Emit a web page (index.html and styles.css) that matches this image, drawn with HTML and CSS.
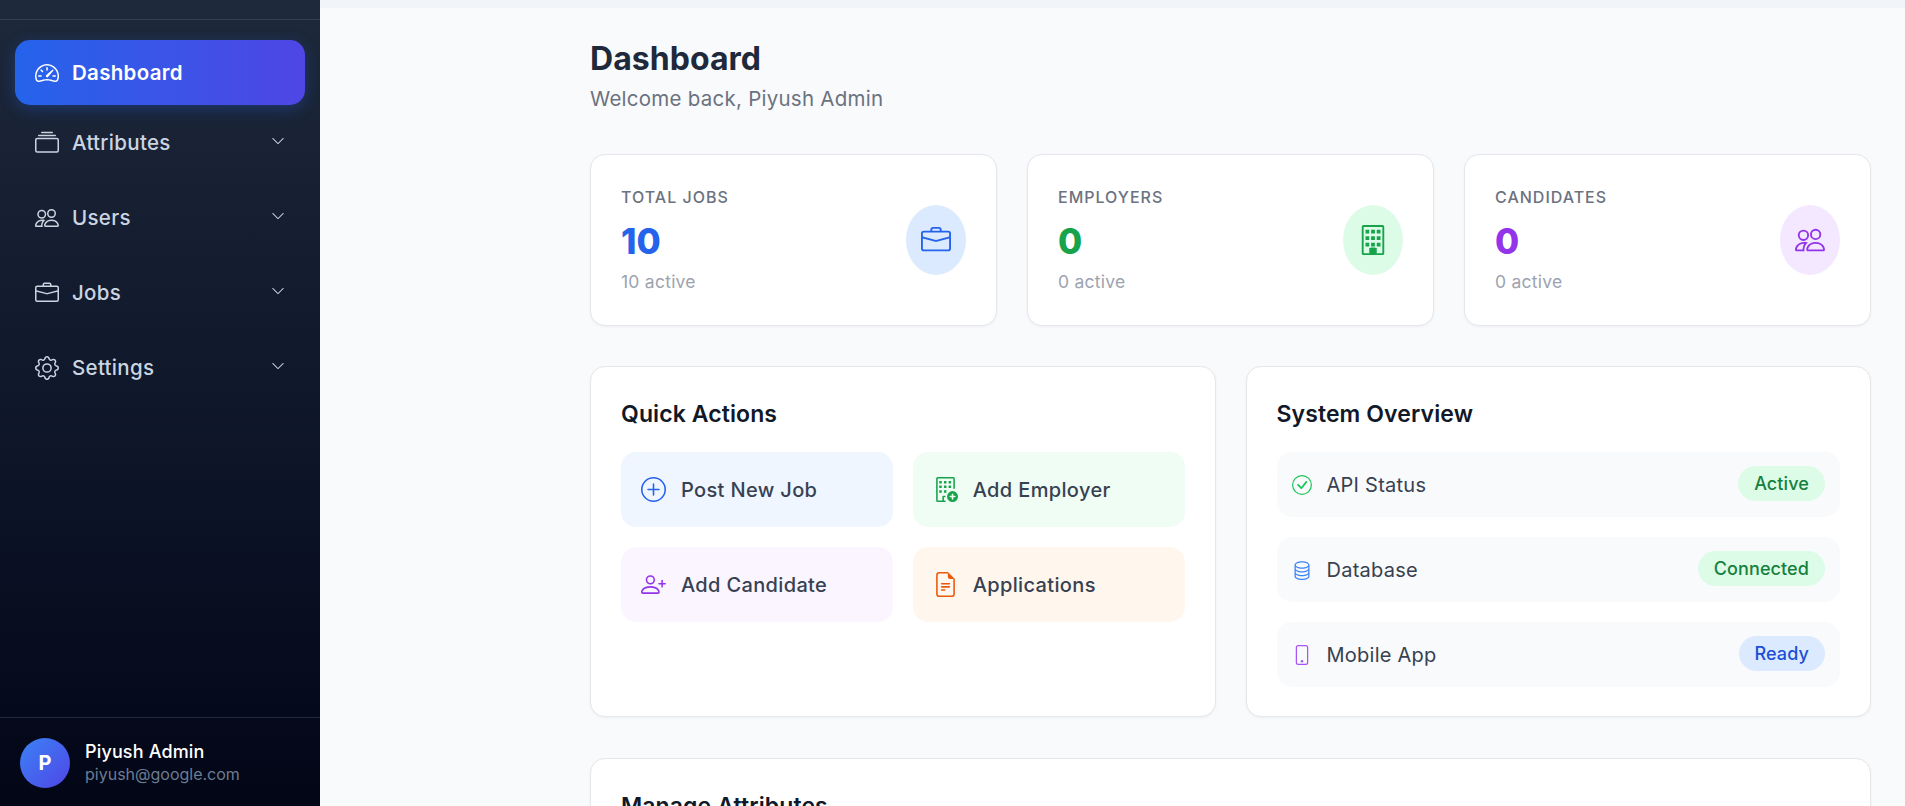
FILE: index.html
```html
<!DOCTYPE html>
<html lang="en">
<head>
<meta charset="utf-8">
<title>Dashboard</title>
<link rel="stylesheet" href="styles.css">
</head>
<body>
<div class="app">
  <aside class="sidebar">
    <div class="side-head"></div>
    <nav class="nav">
      <a class="nav-item active">
        <svg class="nav-icon" viewBox="0 0 16 16" fill="currentColor"><path d="M8 4a.5.5 0 0 1 .5.5V6a.5.5 0 0 1-1 0V4.5A.5.5 0 0 1 8 4zM3.732 5.732a.5.5 0 0 1 .707 0l.915.914a.5.5 0 1 1-.708.708l-.914-.915a.5.5 0 0 1 0-.707zM2 10a.5.5 0 0 1 .5-.5h1.586a.5.5 0 0 1 0 1H2.5A.5.5 0 0 1 2 10zm9.5 0a.5.5 0 0 1 .5-.5h1.5a.5.5 0 0 1 0 1H12a.5.5 0 0 1-.5-.5zm.754-4.246a.389.389 0 0 0-.527-.02L7.547 9.31a.91.91 0 1 0 1.302 1.258l3.434-4.297a.389.389 0 0 0-.029-.518z"/><path d="M0 10a8 8 0 1 1 15.547 2.661c-.442 1.253-1.845 1.602-2.932 1.25C11.309 13.488 9.475 13 8 13c-1.474 0-3.31.488-4.615.911-1.087.352-2.49.003-2.932-1.25A7.988 7.988 0 0 1 0 10zm8-7a7 7 0 0 0-6.603 9.329c.203.575.923.876 1.68.63C4.397 12.533 6.358 12 8 12s3.604.532 4.923.96c.757.245 1.477-.056 1.68-.631A7 7 0 0 0 8 3z"/></svg>
        <span class="nav-label">Dashboard</span>
      </a>
      <a class="nav-item">
        <svg class="nav-icon" viewBox="0 0 16 16" fill="currentColor"><path d="M2.5 3.5a.5.5 0 0 1 0-1h11a.5.5 0 0 1 0 1h-11zm2-2a.5.5 0 0 1 0-1h7a.5.5 0 0 1 0 1h-7zM0 13a1.5 1.5 0 0 0 1.5 1.5h13A1.5 1.5 0 0 0 16 13V6a1.5 1.5 0 0 0-1.5-1.5h-13A1.5 1.5 0 0 0 0 6v7zm1.5.5A.5.5 0 0 1 1 13V6a.5.5 0 0 1 .5-.5h13a.5.5 0 0 1 .5.5v7a.5.5 0 0 1-.5.5h-13z"/></svg>
        <span class="nav-label">Attributes</span>
        <svg class="chev" viewBox="0 0 16 16" fill="currentColor"><path d="M1.646 4.646a.5.5 0 0 1 .708 0L8 10.293l5.646-5.647a.5.5 0 0 1 .708.708l-6 6a.5.5 0 0 1-.708 0l-6-6a.5.5 0 0 1 0-.708z"/></svg>
      </a>
      <a class="nav-item">
        <svg class="nav-icon" viewBox="0 0 16 16" fill="currentColor"><path d="M15 14s1 0 1-1-1-4-5-4-5 3-5 4 1 1 1 1h8Zm-7.978-1A.261.261 0 0 1 7 12.996c.001-.264.167-1.03.76-1.72C8.312 10.629 9.282 10 11 10c1.717 0 2.687.63 3.24 1.276.593.69.758 1.457.76 1.72l-.008.002a.274.274 0 0 1-.014.002H7.022ZM11 7a2 2 0 1 0 0-4 2 2 0 0 0 0 4Zm3-2a3 3 0 1 1-6 0 3 3 0 0 1 6 0ZM6.936 9.28a5.88 5.88 0 0 0-1.23-.247A7.35 7.35 0 0 0 5 9c-4 0-5 3-5 4 0 .667.333 1 1 1h4.216A2.238 2.238 0 0 1 5 13c0-1.01.377-2.042 1.09-2.904.243-.294.526-.569.846-.816ZM4.92 10A5.493 5.493 0 0 0 4 13H1c0-.26.164-1.03.76-1.724.545-.636 1.492-1.256 3.16-1.275ZM1.5 5.5a3 3 0 1 1 6 0 3 3 0 0 1-6 0Zm3-2a2 2 0 1 0 0 4 2 2 0 0 0 0-4Z"/></svg>
        <span class="nav-label">Users</span>
        <svg class="chev" viewBox="0 0 16 16" fill="currentColor"><path d="M1.646 4.646a.5.5 0 0 1 .708 0L8 10.293l5.646-5.647a.5.5 0 0 1 .708.708l-6 6a.5.5 0 0 1-.708 0l-6-6a.5.5 0 0 1 0-.708z"/></svg>
      </a>
      <a class="nav-item">
        <svg class="nav-icon" viewBox="0 0 16 16" fill="currentColor"><path d="M6.5 1A1.5 1.5 0 0 0 5 2.5V3H1.5A1.5 1.5 0 0 0 0 4.5v8A1.5 1.5 0 0 0 1.5 14h13a1.5 1.5 0 0 0 1.5-1.5v-8A1.5 1.5 0 0 0 14.5 3H11v-.5A1.5 1.5 0 0 0 9.5 1h-3zm0 1h3a.5.5 0 0 1 .5.5V3H6v-.5a.5.5 0 0 1 .5-.5zm1.886 6.914L15 7.151V12.5a.5.5 0 0 1-.5.5h-13a.5.5 0 0 1-.5-.5V7.15l6.614 1.764a1.5 1.5 0 0 0 .772 0zM1.5 4h13a.5.5 0 0 1 .5.5v1.616L8.129 7.948a.5.5 0 0 1-.258 0L1 6.116V4.5a.5.5 0 0 1 .5-.5z"/></svg>
        <span class="nav-label">Jobs</span>
        <svg class="chev" viewBox="0 0 16 16" fill="currentColor"><path d="M1.646 4.646a.5.5 0 0 1 .708 0L8 10.293l5.646-5.647a.5.5 0 0 1 .708.708l-6 6a.5.5 0 0 1-.708 0l-6-6a.5.5 0 0 1 0-.708z"/></svg>
      </a>
      <a class="nav-item">
        <svg class="nav-icon" viewBox="0 0 16 16" fill="currentColor"><path d="M8 4.754a3.246 3.246 0 1 0 0 6.492 3.246 3.246 0 0 0 0-6.492zM5.754 8a2.246 2.246 0 1 1 4.492 0 2.246 2.246 0 0 1-4.492 0z"/><path d="M9.796 1.343c-.527-1.79-3.065-1.79-3.592 0l-.094.319a.873.873 0 0 1-1.255.52l-.292-.16c-1.64-.892-3.433.902-2.54 2.541l.159.292a.873.873 0 0 1-.52 1.255l-.319.094c-1.79.527-1.79 3.065 0 3.592l.319.094a.873.873 0 0 1 .52 1.255l-.16.292c-.892 1.64.901 3.434 2.541 2.54l.292-.159a.873.873 0 0 1 1.255.52l.094.319c.527 1.79 3.065 1.79 3.592 0l.094-.319a.873.873 0 0 1 1.255-.52l.292.16c1.64.893 3.434-.902 2.54-2.541l-.159-.292a.873.873 0 0 1 .52-1.255l.319-.094c1.79-.527 1.79-3.065 0-3.592l-.319-.094a.873.873 0 0 1-.52-1.255l.16-.292c.893-1.64-.902-3.433-2.541-2.54l-.292.159a.873.873 0 0 1-1.255-.52l-.094-.319zm-2.633.283c.246-.835 1.428-.835 1.674 0l.094.319a1.873 1.873 0 0 0 2.693 1.115l.291-.16c.764-.415 1.6.42 1.184 1.185l-.159.292a1.873 1.873 0 0 0 1.116 2.692l.318.094c.835.246.835 1.428 0 1.674l-.319.094a1.873 1.873 0 0 0-1.115 2.693l.16.291c.415.764-.42 1.6-1.185 1.184l-.291-.159a1.873 1.873 0 0 0-2.693 1.116l-.094.318c-.246.835-1.428.835-1.674 0l-.094-.319a1.873 1.873 0 0 0-2.692-1.115l-.292.16c-.764.415-1.6-.42-1.184-1.185l.159-.291A1.873 1.873 0 0 0 1.945 8.93l-.319-.094c-.835-.246-.835-1.428 0-1.674l.319-.094A1.873 1.873 0 0 0 3.06 4.377l-.16-.292c-.415-.764.42-1.6 1.185-1.184l.292.159a1.873 1.873 0 0 0 2.692-1.115l.094-.319z"/></svg>
        <span class="nav-label">Settings</span>
        <svg class="chev" viewBox="0 0 16 16" fill="currentColor"><path d="M1.646 4.646a.5.5 0 0 1 .708 0L8 10.293l5.646-5.647a.5.5 0 0 1 .708.708l-6 6a.5.5 0 0 1-.708 0l-6-6a.5.5 0 0 1 0-.708z"/></svg>
      </a>
    </nav>
    <div class="side-user">
      <div class="avatar">P</div>
      <div class="user-text">
        <div class="user-name">Piyush Admin</div>
        <div class="user-mail">piyush@google.com</div>
      </div>
    </div>
  </aside>
  <main class="main">
    <div class="top-band"></div>
    <div class="content">
      <h1 class="page-title">Dashboard</h1>
      <p class="page-sub">Welcome back, Piyush Admin</p>
      <section class="stats">
        <div class="stat">
          <div class="stat-body">
            <div class="stat-label">TOTAL JOBS</div>
            <div class="stat-value blue">10</div>
            <div class="stat-note">10 active</div>
          </div>
          <div class="stat-icon bg-blue blue">
            <svg viewBox="0 0 16 16" fill="currentColor"><path d="M6.5 1A1.5 1.5 0 0 0 5 2.5V3H1.5A1.5 1.5 0 0 0 0 4.5v8A1.5 1.5 0 0 0 1.5 14h13a1.5 1.5 0 0 0 1.5-1.5v-8A1.5 1.5 0 0 0 14.5 3H11v-.5A1.5 1.5 0 0 0 9.5 1h-3zm0 1h3a.5.5 0 0 1 .5.5V3H6v-.5a.5.5 0 0 1 .5-.5zm1.886 6.914L15 7.151V12.5a.5.5 0 0 1-.5.5h-13a.5.5 0 0 1-.5-.5V7.15l6.614 1.764a1.5 1.5 0 0 0 .772 0zM1.5 4h13a.5.5 0 0 1 .5.5v1.616L8.129 7.948a.5.5 0 0 1-.258 0L1 6.116V4.5a.5.5 0 0 1 .5-.5z"/></svg>
          </div>
        </div>
        <div class="stat">
          <div class="stat-body">
            <div class="stat-label">EMPLOYERS</div>
            <div class="stat-value green">0</div>
            <div class="stat-note">0 active</div>
          </div>
          <div class="stat-icon bg-green green">
            <svg viewBox="0 0 16 16" fill="currentColor"><path d="M2 1a1 1 0 0 1 1-1h10a1 1 0 0 1 1 1v14a1 1 0 0 1-1 1H3a1 1 0 0 1-1-1V1Zm1 0v14h3.5v-2.5a.5.5 0 0 1 .5-.5h2a.5.5 0 0 1 .5.5V15H13V1H3Z"/><path d="M4 2.5h2v2H4zM7 2.5h2v2H7zM10 2.5h2v2h-2zM4 6h2v2H4zM7 6h2v2H7zM10 6h2v2h-2zM4 9.5h2v2H4zM7 9.5h2v2H7zM10 9.5h2v2h-2zM6 12.2h4V15H6z"/></svg>
          </div>
        </div>
        <div class="stat">
          <div class="stat-body">
            <div class="stat-label">CANDIDATES</div>
            <div class="stat-value purple">0</div>
            <div class="stat-note">0 active</div>
          </div>
          <div class="stat-icon bg-purple purple">
            <svg viewBox="0 0 16 16" fill="currentColor"><path d="M15 14s1 0 1-1-1-4-5-4-5 3-5 4 1 1 1 1h8Zm-7.978-1A.261.261 0 0 1 7 12.996c.001-.264.167-1.03.76-1.72C8.312 10.629 9.282 10 11 10c1.717 0 2.687.63 3.24 1.276.593.69.758 1.457.76 1.72l-.008.002a.274.274 0 0 1-.014.002H7.022ZM11 7a2 2 0 1 0 0-4 2 2 0 0 0 0 4Zm3-2a3 3 0 1 1-6 0 3 3 0 0 1 6 0ZM6.936 9.28a5.88 5.88 0 0 0-1.23-.247A7.35 7.35 0 0 0 5 9c-4 0-5 3-5 4 0 .667.333 1 1 1h4.216A2.238 2.238 0 0 1 5 13c0-1.01.377-2.042 1.09-2.904.243-.294.526-.569.846-.816ZM4.92 10A5.493 5.493 0 0 0 4 13H1c0-.26.164-1.03.76-1.724.545-.636 1.492-1.256 3.16-1.275ZM1.5 5.5a3 3 0 1 1 6 0 3 3 0 0 1-6 0Zm3-2a2 2 0 1 0 0 4 2 2 0 0 0 0-4Z"/></svg>
          </div>
        </div>
      </section>
      <section class="panels">
        <div class="panel">
          <h2 class="panel-title">Quick Actions</h2>
          <div class="actions">
            <a class="action bg-l-blue">
              <svg class="action-icon blue" viewBox="0 0 16 16" fill="currentColor"><path d="M8 15A7 7 0 1 1 8 1a7 7 0 0 1 0 14zm0 1A8 8 0 1 0 8 0a8 8 0 0 0 0 16z"/><path d="M8 4a.5.5 0 0 1 .5.5v3h3a.5.5 0 0 1 0 1h-3v3a.5.5 0 0 1-1 0v-3h-3a.5.5 0 0 1 0-1h3v-3A.5.5 0 0 1 8 4z"/></svg>
              <span>Post New Job</span>
            </a>
            <a class="action bg-l-green">
              <svg class="action-icon green" viewBox="0 0 16 16" fill="currentColor"><path d="M12.5 16a3.5 3.5 0 1 0 0-7 3.5 3.5 0 0 0 0 7Zm.5-5v1h1a.5.5 0 0 1 0 1h-1v1a.5.5 0 0 1-1 0v-1h-1a.5.5 0 0 1 0-1h1v-1a.5.5 0 0 1 1 0Z"/><path d="M2 1a1 1 0 0 1 1-1h10a1 1 0 0 1 1 1v6.5h-1V1H3v14h3v-2.5a.5.5 0 0 1 .5-.5H8v1H7v2h1v1H3a1 1 0 0 1-1-1V1Z"/><path d="M4 2.5h1.6v1.6H4zM7 2.5h1.6v1.6H7zM10 2.5h1.6v1.6H10zM4 5.5h1.6v1.6H4zM7 5.5h1.6v1.6H7zM10 5.5h1.6v1.6H10zM4 8.5h1.6v1.6H4zM7 8.5h1.6v1.6H7z"/></svg>
              <span>Add Employer</span>
            </a>
            <a class="action bg-l-purple">
              <svg class="action-icon purple" viewBox="0 0 16 16" fill="currentColor"><path d="M6 8a3 3 0 1 0 0-6 3 3 0 0 0 0 6Zm2-3a2 2 0 1 1-4 0 2 2 0 0 1 4 0Zm4 8c0 1-1 1-1 1H1s-1 0-1-1 1-4 6-4 6 3 6 4Zm-1-.004c-.001-.246-.154-.986-.832-1.664C9.516 10.68 8.289 10 6 10c-2.29 0-3.516.68-4.168 1.332-.678.678-.83 1.418-.832 1.664h10Z"/><path fill-rule="evenodd" d="M13.5 5a.5.5 0 0 1 .5.5V7h1.5a.5.5 0 0 1 0 1H14v1.5a.5.5 0 0 1-1 0V8h-1.5a.5.5 0 0 1 0-1H13V5.5a.5.5 0 0 1 .5-.5Z"/></svg>
              <span>Add Candidate</span>
            </a>
            <a class="action bg-l-orange">
              <svg class="action-icon orange" viewBox="0 0 16 16" fill="currentColor"><path d="M5.5 7a.5.5 0 0 0 0 1h5a.5.5 0 0 0 0-1h-5zM5 9.5a.5.5 0 0 1 .5-.5h5a.5.5 0 0 1 0 1h-5a.5.5 0 0 1-.5-.5zm0 2a.5.5 0 0 1 .5-.5h2a.5.5 0 0 1 0 1h-2a.5.5 0 0 1-.5-.5z"/><path d="M9.5 0H4a2 2 0 0 0-2 2v12a2 2 0 0 0 2 2h8a2 2 0 0 0 2-2V4.5L9.5 0zm0 1v2A1.5 1.5 0 0 0 11 4.5h2V14a1 1 0 0 1-1 1H4a1 1 0 0 1-1-1V2a1 1 0 0 1 1-1h5.5z"/></svg>
              <span>Applications</span>
            </a>
          </div>
        </div>
        <div class="panel">
          <h2 class="panel-title">System Overview</h2>
          <div class="rows">
            <div class="row">
              <svg class="row-icon c-check" viewBox="0 0 16 16" fill="currentColor"><path d="M8 15A7 7 0 1 1 8 1a7 7 0 0 1 0 14zm0 1A8 8 0 1 0 8 0a8 8 0 0 0 0 16z"/><path d="M10.97 4.97a.235.235 0 0 0-.02.022L7.477 9.417 5.384 7.323a.75.75 0 0 0-1.06 1.06L6.97 11.03a.75.75 0 0 0 1.079-.02l3.992-4.99a.75.75 0 0 0-1.071-1.05z"/></svg>
              <span class="row-label">API Status</span>
              <span class="badge b-green">Active</span>
            </div>
            <div class="row">
              <svg class="row-icon c-db" viewBox="0 0 16 16" fill="currentColor"><path d="M4.318 2.687C5.234 2.271 6.536 2 8 2s2.766.27 3.682.687C12.644 3.125 13 3.627 13 4c0 .374-.356.875-1.318 1.313C10.766 5.729 9.464 6 8 6s-2.766-.27-3.682-.687C3.356 4.875 3 4.373 3 4c0-.374.356-.875 1.318-1.313ZM13 5.698V7c0 .374-.356.875-1.318 1.313C10.766 8.729 9.464 9 8 9s-2.766-.27-3.682-.687C3.356 7.875 3 7.373 3 7V5.698c.271.202.58.378.904.525C4.978 6.711 6.427 7 8 7s3.022-.289 4.096-.777A4.92 4.92 0 0 0 13 5.698ZM14 4c0-1.007-.875-1.755-1.904-2.223C11.022 1.289 9.573 1 8 1s-3.022.289-4.096.777C2.875 2.245 2 2.993 2 4v9c0 1.007.875 1.755 1.904 2.223C4.978 15.71 6.427 16 8 16s3.022-.289 4.096-.777C13.125 14.755 14 14.007 14 13V4Zm-1 4.698V10c0 .374-.356.875-1.318 1.313C10.766 11.729 9.464 12 8 12s-2.766-.27-3.682-.687C3.356 10.875 3 10.373 3 10V8.698c.271.202.58.378.904.525C4.978 9.71 6.427 10 8 10s3.022-.289 4.096-.777A4.92 4.92 0 0 0 13 8.698Zm0 3V13c0 .374-.356.875-1.318 1.313C10.766 14.729 9.464 15 8 15s-2.766-.27-3.682-.687C3.356 13.875 3 13.373 3 13v-1.302c.271.202.58.378.904.525C4.978 12.71 6.427 13 8 13s3.022-.289 4.096-.777c.324-.147.633-.323.904-.525Z"/></svg>
              <span class="row-label">Database</span>
              <span class="badge b-green">Connected</span>
            </div>
            <div class="row">
              <svg class="row-icon c-phone" viewBox="0 0 16 16" fill="currentColor"><path d="M11 1a1 1 0 0 1 1 1v12a1 1 0 0 1-1 1H5a1 1 0 0 1-1-1V2a1 1 0 0 1 1-1h6zM5 0a2 2 0 0 0-2 2v12a2 2 0 0 0 2 2h6a2 2 0 0 0 2-2V2a2 2 0 0 0-2-2H5z"/><path d="M8 14a1 1 0 1 0 0-2 1 1 0 0 0 0 2z"/></svg>
              <span class="row-label">Mobile App</span>
              <span class="badge b-blue">Ready</span>
            </div>
          </div>
        </div>
      </section>
      <section class="panel panel-wide">
        <h2 class="panel-title">Manage Attributes</h2>
      </section>
    </div>
  </main>
</div>
</body>
</html>
```
FILE: styles.css
```css
* { box-sizing: border-box; }
html, body { margin: 0; height: 100%; overflow: hidden; }
body { font-family: Inter, "Open Sans", sans-serif; background: #f9fafb; color: #1f2937; }

.app { display: flex; height: 806px; overflow: hidden; }

.sidebar {
  width: 320px; flex: none; display: flex; flex-direction: column;
  background: linear-gradient(180deg, #1e293b 0%, #0f172a 50%, #020617 100%);
}
.side-head { height: 20px; flex: none; border-bottom: 1px solid #334155; }
.nav { flex: 1; padding: 20px 15px 0; display: flex; flex-direction: column; }
.nav-item {
  height: 65px; display: flex; align-items: center; gap: 13px;
  padding: 0 20px; margin-bottom: 10px; border-radius: 15px;
  color: #cbd5e1; font-size: 20.5px; font-weight: 500;
}
.nav-item.active {
  margin-bottom: 5px; color: #fff; font-weight: 600;
  background: linear-gradient(90deg, #2563eb, #4f46e5);
  box-shadow: 0 4px 15px rgba(37, 99, 235, .3);
}
.nav-icon { width: 24px; height: 24px; flex: none; }
.nav-label { flex: 1; letter-spacing: .3px; }
.chev { width: 14px; height: 14px; flex: none; margin-top: -4px; }

.side-user {
  height: 89px; flex: none; display: flex; align-items: center; gap: 15px;
  padding: 2px 20px 0; border-top: 1px solid #1e293b;
}
.avatar {
  width: 50px; height: 50px; border-radius: 50%; flex: none;
  display: flex; align-items: center; justify-content: center;
  background: linear-gradient(135deg, #3b82f6, #4f46e5);
  color: #fff; font-size: 20px; font-weight: 700;
}
.user-name { color: #fff; font-size: 18px; font-weight: 500; line-height: 23px; letter-spacing: .15px; }
.user-mail { color: #6b7c93; font-size: 16px; line-height: 23px; }

.main { flex: 1; min-width: 0; }
.top-band { height: 8px; background: #f1f5f9; }
.content { padding: 33px 34px 0 270px; }
.page-title { margin: 0; font-size: 32px; line-height: 36px; font-weight: 700; letter-spacing: .05px; color: #1e293b; }
.page-sub { margin: 8px 0 0; font-size: 20.5px; line-height: 28px; letter-spacing: .25px; color: #6b7280; }

.stats { display: grid; grid-template-columns: repeat(3, 1fr); gap: 30px; margin-top: 41px; }
.stat {
  height: 172px; display: flex; align-items: center; justify-content: space-between;
  padding: 0 30px; background: #fff; border: 1px solid #e5e7eb; border-radius: 15px;
  box-shadow: 0 1px 3px rgba(0, 0, 0, .05);
}
.stat-body { padding-bottom: 2px; }
.stat-label { font-size: 16px; line-height: 24px; font-weight: 500; letter-spacing: 1px; color: #6b7280; }
.stat-value { font-size: 35px; line-height: 46px; font-weight: 800; margin-top: 9px; }
.stat-note { font-size: 17.5px; line-height: 24px; letter-spacing: .25px; color: #9ca3af; margin-top: 6px; }
.stat-icon {
  width: 60px; height: 70px; border-radius: 50%; flex: none;
  display: flex; align-items: center; justify-content: center;
}
.stat-icon svg { width: 30px; height: 30px; }

.blue { color: #2563eb; }
.green { color: #16a34a; }
.purple { color: #9333ea; }
.orange { color: #ea580c; }
.bg-blue { background: #dbeafe; }
.bg-green { background: #dcfce7; }
.bg-purple { background: #f3e8ff; }
.bg-l-blue { background: #eff6ff; }
.bg-l-green { background: #f0fdf4; }
.bg-l-purple { background: #faf5ff; }
.bg-l-orange { background: #fff7ed; }

.panels { display: grid; grid-template-columns: 1fr 1fr; gap: 30px; margin-top: 40px; }
.panel {
  height: 351px; padding: 30px; background: #fff; border: 1px solid #e5e7eb; border-radius: 15px;
  box-shadow: 0 1px 3px rgba(0, 0, 0, .05);
}
.panel-wide { margin-top: 41px; }
.panel-title { margin: 0 0 23px; padding-top: 2px; font-size: 23px; line-height: 30px; font-weight: 600; letter-spacing: .1px; color: #111827; }

.actions { display: grid; grid-template-columns: 1fr 1fr; gap: 20px; }
.action {
  height: 75px; display: flex; align-items: center; gap: 15px; padding: 0 20px;
  border-radius: 15px; font-size: 20px; font-weight: 500; letter-spacing: .35px; color: #374151;
}
.action-icon { width: 25px; height: 25px; flex: none; }

.rows { display: flex; flex-direction: column; gap: 20px; }
.row {
  height: 65px; display: flex; align-items: center; padding: 0 15px;
  background: #f9fafb; border-radius: 15px;
}
.row-icon { width: 20px; height: 24px; flex: none; margin-right: 15px; }
.row-label { flex: 1; font-size: 20px; letter-spacing: .25px; color: #374151; }
.badge { height: 35px; display: flex; align-items: center; padding: 0 16px; border-radius: 18px; font-size: 18px; font-weight: 500; letter-spacing: .1px; margin-top: -2px; }
.b-green { background: #dcfce7; color: #15803d; }
.b-blue { background: #dbeafe; color: #1d4ed8; }
.c-check { color: #22c55e; }
.c-db { color: #3b82f6; }
.c-phone { color: #a855f7; }
```
